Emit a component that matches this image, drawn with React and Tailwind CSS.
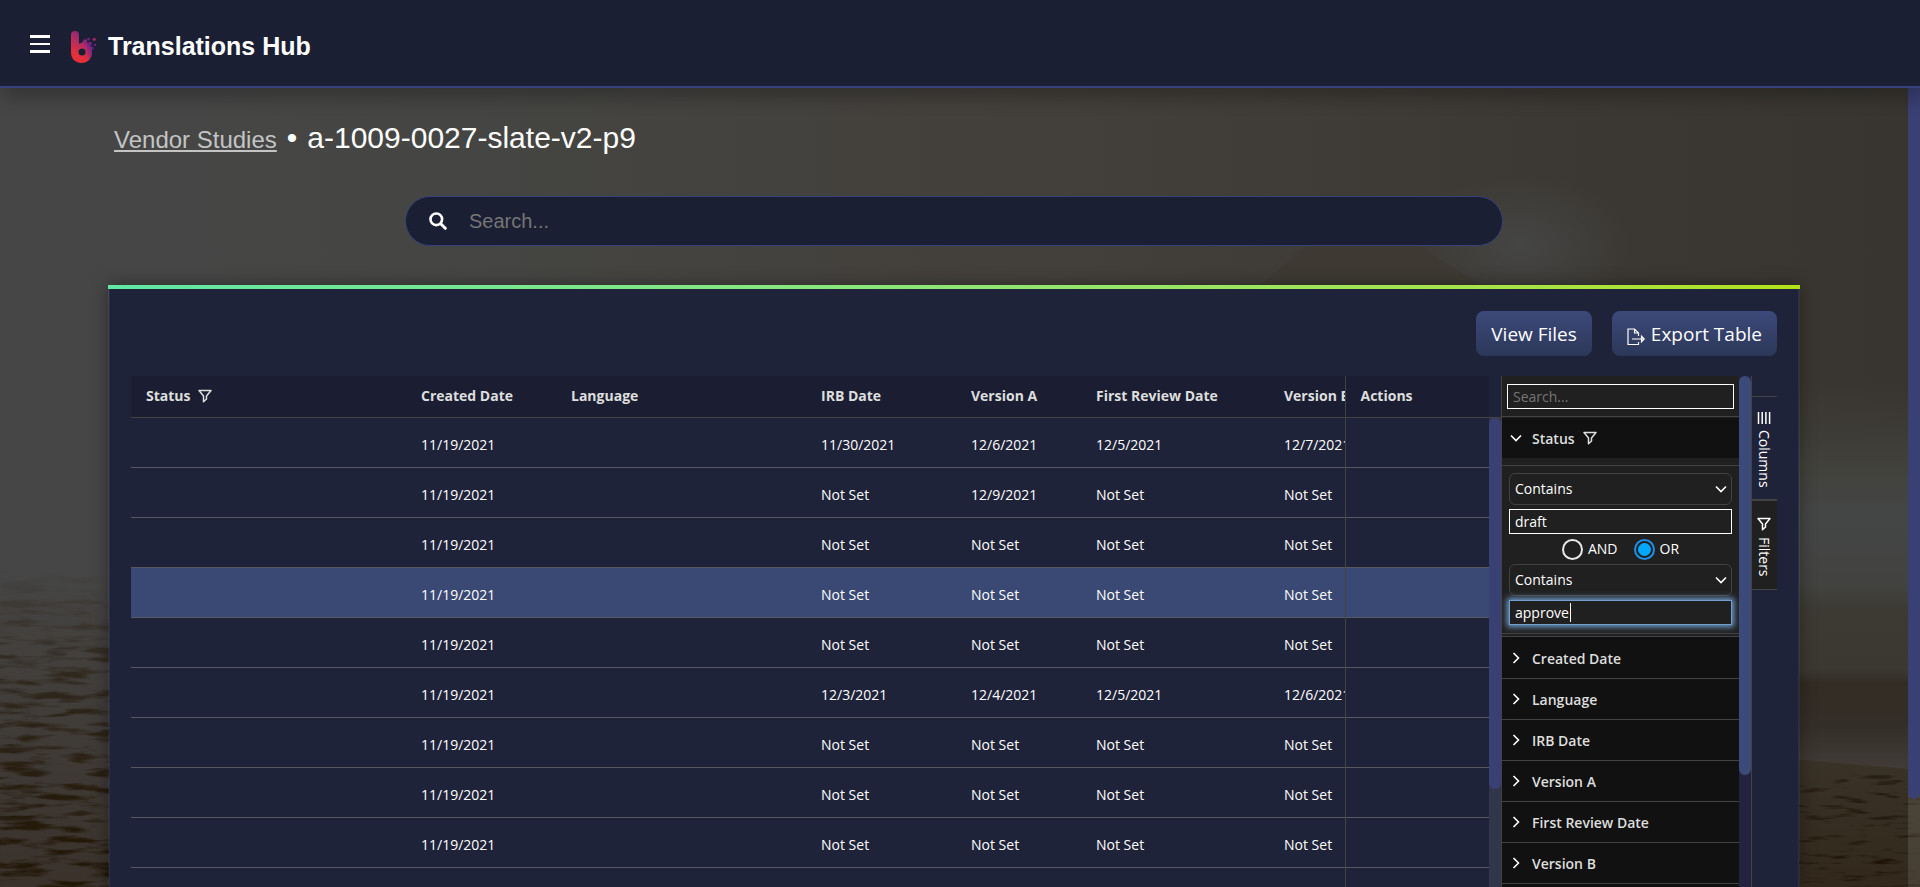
import React from "react";

const ROWS = [
  ["11/30/2021", "12/6/2021", "12/5/2021", "12/7/2021"],
  ["Not Set", "12/9/2021", "Not Set", "Not Set"],
  ["Not Set", "Not Set", "Not Set", "Not Set"],
  ["Not Set", "Not Set", "Not Set", "Not Set"],
  ["Not Set", "Not Set", "Not Set", "Not Set"],
  ["12/3/2021", "12/4/2021", "12/5/2021", "12/6/2021"],
  ["Not Set", "Not Set", "Not Set", "Not Set"],
  ["Not Set", "Not Set", "Not Set", "Not Set"],
  ["Not Set", "Not Set", "Not Set", "Not Set"],
];
const SELECTED_ROW = 3;

const COLLAPSED = ["Created Date", "Language", "IRB Date", "Version A", "First Review Date", "Version B"];

function Backdrop() {
  return (
    <svg
      className="absolute inset-0 -z-10 h-full w-full"
      viewBox="0 0 1920 887"
      preserveAspectRatio="none"
      aria-hidden="true"
    >
      <defs>
        <linearGradient id="sky" x1="0" y1="0" x2="1" y2="0">
          <stop offset="0" stopColor="#464646" />
          <stop offset="0.2" stopColor="#454644" />
          <stop offset="0.55" stopColor="#433f3a" />
          <stop offset="0.8" stopColor="#3c3934" />
          <stop offset="1" stopColor="#383530" />
        </linearGradient>
        <linearGradient id="leftShore" x1="0" y1="0" x2="0" y2="1">
          <stop offset="0" stopColor="#464646" stopOpacity="0" />
          <stop offset="0.15" stopColor="#444240" />
          <stop offset="0.5" stopColor="#403c38" />
          <stop offset="1" stopColor="#3a322b" />
        </linearGradient>
        <linearGradient id="rightShore" x1="0" y1="0" x2="0" y2="1">
          <stop offset="0" stopColor="#403d37" stopOpacity="0" />
          <stop offset="0.2" stopColor="#42423d" />
          <stop offset="0.3" stopColor="#444646" />
          <stop offset="0.44" stopColor="#424340" />
          <stop offset="0.5" stopColor="#3d3a34" />
          <stop offset="0.63" stopColor="#3b3731" />
          <stop offset="0.66" stopColor="#322c23" />
          <stop offset="0.75" stopColor="#342e28" />
          <stop offset="0.84" stopColor="#403b36" />
          <stop offset="1" stopColor="#3d3833" />
        </linearGradient>
        <linearGradient id="sand" x1="0" y1="0" x2="0" y2="1">
          <stop offset="0" stopColor="#393226" />
          <stop offset="1" stopColor="#32291c" />
        </linearGradient>
        <radialGradient id="glow">
          <stop offset="0" stopColor="#454544" />
          <stop offset="1" stopColor="#454544" stopOpacity="0" />
        </radialGradient>
        <linearGradient id="fade" x1="0" y1="0" x2="0" y2="1">
          <stop offset="0" stopColor="#000" />
          <stop offset="0.3" stopColor="#888" />
          <stop offset="1" stopColor="#fff" />
        </linearGradient>
        <mask id="fadeLeft">
          <rect x="0" y="570" width="120" height="317" fill="url(#fade)" />
        </mask>
        <filter id="ripples" x="0" y="0" width="1" height="1" colorInterpolationFilters="sRGB">
          <feTurbulence type="fractalNoise" baseFrequency="0.022 0.13" numOctaves="4" seed="8" />
          <feColorMatrix values="0 0 0 0 0.13  0 0 0 0 0.085  0 0 0 0 0.02  4 0 0 0 -1.9" />
        </filter>
        <filter id="grain" x="0" y="0" width="1" height="1" colorInterpolationFilters="sRGB">
          <feTurbulence type="fractalNoise" baseFrequency="0.03 0.2" numOctaves="3" seed="21" />
          <feColorMatrix values="0 0 0 0 0.1  0 0 0 0 0.05  0 0 0 0 0.01  3 0 0 0 -1.7" />
        </filter>
      </defs>
      <rect width="1920" height="887" fill="url(#sky)" />
      <ellipse cx="1520" cy="245" rx="110" ry="70" fill="url(#glow)" />
      <path d="M1255 290c25-18 45-48 80-58 40-8 75 0 95 20 20 16 45 30 70 38z" fill="#3e3a33" />
      <rect x="0" y="560" width="120" height="327" fill="url(#leftShore)" />
      <g mask="url(#fadeLeft)">
        <rect x="0" y="570" width="120" height="317" filter="url(#ripples)" />
      </g>
      <rect x="1780" y="380" width="140" height="460" fill="url(#rightShore)" />
      <path d="M1780 758l140 12v117h-140z" fill="url(#sand)" />
      <rect x="1780" y="775" width="140" height="112" filter="url(#grain)" />
    </svg>
  );
}

function Logo() {
  return (
    <svg className="h-[34px] w-7" viewBox="0 0 28 34" aria-hidden="true">
      <defs>
        <linearGradient id="logoFill" x1="0.75" y1="0" x2="0.3" y2="1">
          <stop offset="0" stopColor="#7b2382" />
          <stop offset="0.45" stopColor="#b42c62" />
          <stop offset="0.8" stopColor="#e5303a" />
        </linearGradient>
        <linearGradient id="logoSide" x1="0.2" y1="0.7" x2="1" y2="0.3">
          <stop offset="0.3" stopColor="#76238a" stopOpacity="0" />
          <stop offset="1" stopColor="#76238a" />
        </linearGradient>
      </defs>
      <path
        d="M1 5a4 4 0 0 1 8 0v8c0 1 1 1 2 0a4 4 0 0 1 5-1c4 2 6 5 6 10 0 7-4.500 11-10.500 11S1 29 1 22zM12 18.500a3.500 3.500 0 1 0 0 7 3.500 3.500 0 0 0 0-7z"
        fill="url(#logoFill)"
      />
      <path
        d="M12 12.500a4 4 0 0 1 4-.5c4 2 6 5 6 10 0 7-4.500 11-10.500 11l.5-7.500a3.500 3.500 0 0 0 0-7z"
        fill="url(#logoSide)"
      />
      <circle cx="15" cy="11.500" r="2.200" fill="#8c2878" />
      <circle cx="18.500" cy="9" r="1.500" fill="#6d2280" />
      <circle cx="20" cy="13.500" r="2" fill="#6d2280" />
      <circle cx="24.200" cy="9.300" r="1.600" fill="#a52a5c" />
      <circle cx="25" cy="15" r="1.200" fill="#6d2280" />
      <circle cx="22" cy="18" r="1.600" fill="#6d2280" />
    </svg>
  );
}

function FilterIcon({ className }) {
  return (
    <svg className={className} viewBox="0 0 14 14" fill="none" stroke="currentColor" strokeWidth="1.500" aria-hidden="true">
      <path d="M1 1.500h12L8.500 7v3L5.500 12.800V7z" strokeLinejoin="round" />
    </svg>
  );
}

function Chevron({ className }) {
  return (
    <svg className={className} viewBox="0 0 12 12" fill="none" stroke="currentColor" strokeWidth="1.600" aria-hidden="true">
      <path d="M1 3.500l5 5 5-5" />
    </svg>
  );
}

function ExportIcon() {
  return (
    <svg className="mt-1 h-[18px] w-[18px]" viewBox="0 0 18 18" fill="none" stroke="currentColor" strokeWidth="1.200" aria-hidden="true">
      <path d="M11.500 8V5L7.500 1H1v15.500h10.500V14M7.500 1v4h4M5 11h12M14.500 8.200L17.200 11l-2.700 2.800z" />
    </svg>
  );
}

function ConditionSelect({ label }) {
  return (
    <div className="relative">
      <select
        aria-label={label}
        defaultValue="Contains"
        className="block h-8 w-full appearance-none rounded-md border border-[#424242] bg-[#202020] px-[5px] text-sm text-white"
      >
        <option>Contains</option>
        <option>Equals</option>
      </select>
      <Chevron className="pointer-events-none absolute top-[10px] right-[5px] h-3 w-3" />
    </div>
  );
}

export default function App() {
  return (
    <div className="relative isolate flex h-screen flex-col overflow-hidden font-['Open_Sans',sans-serif] text-sm text-white">
      <Backdrop />

      <header className="relative z-10 flex h-[88px] shrink-0 items-center border-b-2 border-[#36407a] bg-[#1b1f33] pl-[30px] shadow-[4px_10px_16px_rgba(0,0,0,0.25)]">
        <button type="button" aria-label="Menu" className="mt-px flex flex-col gap-[5px]">
          <span className="h-[3px] w-5 bg-white" />
          <span className="h-[2px] w-5 bg-white" />
          <span className="h-[3px] w-5 bg-white" />
        </button>
        <span className="mt-2 ml-5">
          <Logo />
        </span>
        <span className="mt-1.5 ml-2.5 font-['Liberation_Sans',sans-serif] text-[25px] leading-8 font-bold">
          Translations Hub
        </span>
      </header>

      <div className="flex min-h-0 flex-1">
        <main className="flex min-w-0 flex-1 flex-col px-[108px]">
          <div className="mt-[30px] flex h-10 shrink-0 items-baseline gap-2.5 pl-1.5 font-['Liberation_Sans',sans-serif] text-[30px] leading-10">
            <a href="#vendor-studies" className="text-2xl leading-10 text-[#c4c4c4] underline">
              Vendor Studies
            </a>
            <span>•</span>
            <h1>a-1009-0027-slate-v2-p9</h1>
          </div>

          <form className="mx-auto mt-[38px] flex h-[50px] w-full max-w-[1098px] shrink-0 items-center rounded-full border border-[#36407a] bg-[#1b1f33] px-[23px]">
            <svg className="h-[18px] w-[18px] shrink-0" viewBox="0 0 18 18" fill="none" stroke="currentColor" strokeLinecap="round" aria-hidden="true">
              <circle cx="7.300" cy="7.300" r="5.800" strokeWidth="2.600" />
              <path d="M12 12l4.300 4.300" strokeWidth="3" />
            </svg>
            <input
              type="text"
              aria-label="Search"
              placeholder="Search..."
              className="ml-[22px] min-w-0 flex-1 bg-transparent font-['Liberation_Sans',sans-serif] text-xl placeholder:text-[#757575] focus:outline-none"
            />
          </form>

          <section className="mt-[39px] flex min-h-0 flex-1 flex-col shadow-[0_0_16px_rgba(0,0,0,0.35)]">
            <div className="h-1 shrink-0 bg-linear-to-r from-[#5fe8a4] to-[#b1e219]" />
            <div className="mx-px flex min-h-0 flex-1 flex-col border-x border-[#25304f] bg-[#1f2339] px-[21px] pt-[22px]">
              <div className="flex h-[45px] shrink-0 justify-end gap-5">
                <button type="button" className="rounded-lg bg-linear-to-b from-[#3c4a7a] to-[#2c3759] px-[15px] pt-[3px] text-[19px]">
                  View Files
                </button>
                <button type="button" className="flex items-center gap-1.5 rounded-lg bg-linear-to-b from-[#3c4a7a] to-[#2c3759] px-[15px] pt-[3px] text-[19px]">
                  <ExportIcon />
                  Export Table
                </button>
              </div>

              <div className="mt-5 flex min-h-0 flex-1">
                <div className="min-w-0 flex-1 overflow-hidden">
                  <table className="w-full table-fixed border-collapse text-left whitespace-nowrap">
                    <colgroup>
                      <col className="w-[275px]" />
                      <col className="w-[150px]" />
                      <col className="w-[250px]" />
                      <col className="w-[150px]" />
                      <col className="w-[125px]" />
                      <col className="w-[188px]" />
                      <col />
                      <col className="w-36" />
                    </colgroup>
                    <thead>
                      <tr className="h-[41px] border-b border-[#424242] bg-[#1b1e32] text-[#dedede] [&>th]:overflow-hidden [&>th]:p-0 [&>th]:pl-[15px] [&>th]:font-bold">
                        <th scope="col">
                          <span className="flex items-center gap-2">
                            Status
                            <FilterIcon className="h-3.5 w-3.5" />
                          </span>
                        </th>
                        <th scope="col">Created Date</th>
                        <th scope="col">Language</th>
                        <th scope="col">IRB Date</th>
                        <th scope="col">Version A</th>
                        <th scope="col">First Review Date</th>
                        <th scope="col">Version B</th>
                        <th scope="col" className="border-l border-[#424242]">Actions</th>
                      </tr>
                    </thead>
                    <tbody>
                      {ROWS.map((dates, i) => (
                        <tr
                          key={i}
                          className={`h-[50px] border-b border-[#58595e] [&>td]:overflow-hidden [&>td]:p-0 [&>td]:pt-[5px] [&>td]:pl-[15px] ${i === SELECTED_ROW ? "bg-[#394973]" : ""}`}
                        >
                          <td />
                          <td>11/19/2021</td>
                          <td />
                          {dates.map((d, j) => (
                            <td key={j}>{d}</td>
                          ))}
                          <td className="border-l border-[#424242]" />
                        </tr>
                      ))}
                      <tr className="h-[50px]">
                        <td colSpan={7} />
                        <td className="border-l border-[#424242]" />
                      </tr>
                    </tbody>
                  </table>
                </div>

                <div className="flex w-3 shrink-0 flex-col" aria-hidden="true">
                  <div className="h-[42px] shrink-0 border-b border-[#424242]" />
                  <div className="flex-1 bg-[#32364b]">
                    <div className="h-[79%] rounded-full bg-[#394073]" />
                  </div>
                </div>

                <aside className="flex w-[251px] shrink-0 border-x border-[#424242]">
                  <div className="flex min-w-0 flex-1 flex-col bg-[#202020]">
                    <div className="h-[41px] shrink-0 border-b border-[#424242] px-[5px] pt-2">
                      <input
                        type="text"
                        aria-label="Search filters"
                        placeholder="Search..."
                        className="block h-[25px] w-full border border-white bg-[#202020] px-[5px] placeholder:text-[#757575] focus:outline-none"
                      />
                    </div>
                    <button type="button" className="mt-px flex h-10 shrink-0 items-center bg-[#111] pl-2 font-semibold text-[#dedede]">
                      <Chevron className="h-3 w-3 text-white" />
                      <span className="mt-0.5 mr-2 ml-2.5">Status</span>
                      <FilterIcon className="h-3.5 w-3.5" />
                    </button>
                    <fieldset className="mt-[7px] mb-0.5 flex h-[169px] shrink-0 flex-col border-y border-[#424242] px-[7px] pt-[7px]">
                      <ConditionSelect label="First condition" />
                      <input
                        type="text"
                        aria-label="First filter value"
                        defaultValue="draft"
                        className="mt-1 block h-[25px] w-full shrink-0 border border-white bg-[#202020] px-[5px] focus:outline-none"
                      />
                      <div className="flex h-[30px] shrink-0 items-center justify-center gap-4">
                        <label className="flex items-center gap-[5px]">
                          <input
                            type="radio"
                            name="join"
                            className="h-[21px] w-[21px] appearance-none rounded-full border-2 border-[#e8e8e8]"
                          />
                          AND
                        </label>
                        <label className="flex items-center gap-[5px]">
                          <input
                            type="radio"
                            name="join"
                            defaultChecked
                            className="h-[21px] w-[21px] appearance-none rounded-full border-2 border-[#1e8fe8] bg-[#00a9ff] bg-clip-content p-0.5"
                          />
                          OR
                        </label>
                      </div>
                      <ConditionSelect label="Second condition" />
                      <div className="relative mt-1">
                        <input
                          type="text"
                          aria-label="Second filter value"
                          defaultValue="approve"
                          className="block h-[25px] w-full border border-[#719ece] bg-[#202020] px-[5px] shadow-[0_0_6px_2px_#719ece] focus:outline-none"
                        />
                        <span className="absolute top-[3px] left-[61px] h-[19px] w-px bg-white" aria-hidden="true" />
                      </div>
                    </fieldset>
                    <div className="flex min-h-0 flex-1 flex-col border-t border-[#424242] bg-[#111] pt-px">
                      {COLLAPSED.map((name) => (
                        <button
                          key={name}
                          type="button"
                          className="flex h-[41px] shrink-0 items-center border-b border-[#424242] pl-2 font-semibold text-[#dedede]"
                        >
                          <Chevron className="h-3 w-3 -rotate-90 text-white" />
                          <span className="mt-0.5 ml-2.5">{name}</span>
                        </button>
                      ))}
                    </div>
                  </div>
                  <div className="w-3 shrink-0 bg-[#23233f]" aria-hidden="true">
                    <div className="h-[78%] rounded-full bg-[#3c4a7a]" />
                  </div>
                </aside>

                <div className="flex w-[25px] shrink-0 flex-col pt-5">
                  <button
                    type="button"
                    className="flex h-[105px] w-full flex-col items-center gap-1.5 border-y border-b-2 border-[#424242] pt-[15px] pr-0.5"
                  >
                    <svg className="h-3 w-3.5 shrink-0" viewBox="0 0 14 12" stroke="currentColor" strokeWidth="1.500" aria-hidden="true">
                      <path d="M1.500 0v12M5.200 0v12M8.900 0v12M12.600 0v12" />
                    </svg>
                    <span className="leading-5 [writing-mode:vertical-rl]">Columns</span>
                  </button>
                  <button
                    type="button"
                    className="flex h-[89px] w-full flex-col items-center gap-1.5 border-b border-[#424242] bg-[#202020] pt-4 pr-0.5"
                  >
                    <FilterIcon className="h-3.5 w-3.5 shrink-0" />
                    <span className="leading-5 [writing-mode:vertical-rl]">Filters</span>
                  </button>
                </div>
              </div>
            </div>
          </section>
        </main>

        <div className="w-3 shrink-0 bg-white/10" aria-hidden="true">
          <div className="h-[89%] rounded-b-full bg-[#394073]" />
        </div>
      </div>
    </div>
  );
}
